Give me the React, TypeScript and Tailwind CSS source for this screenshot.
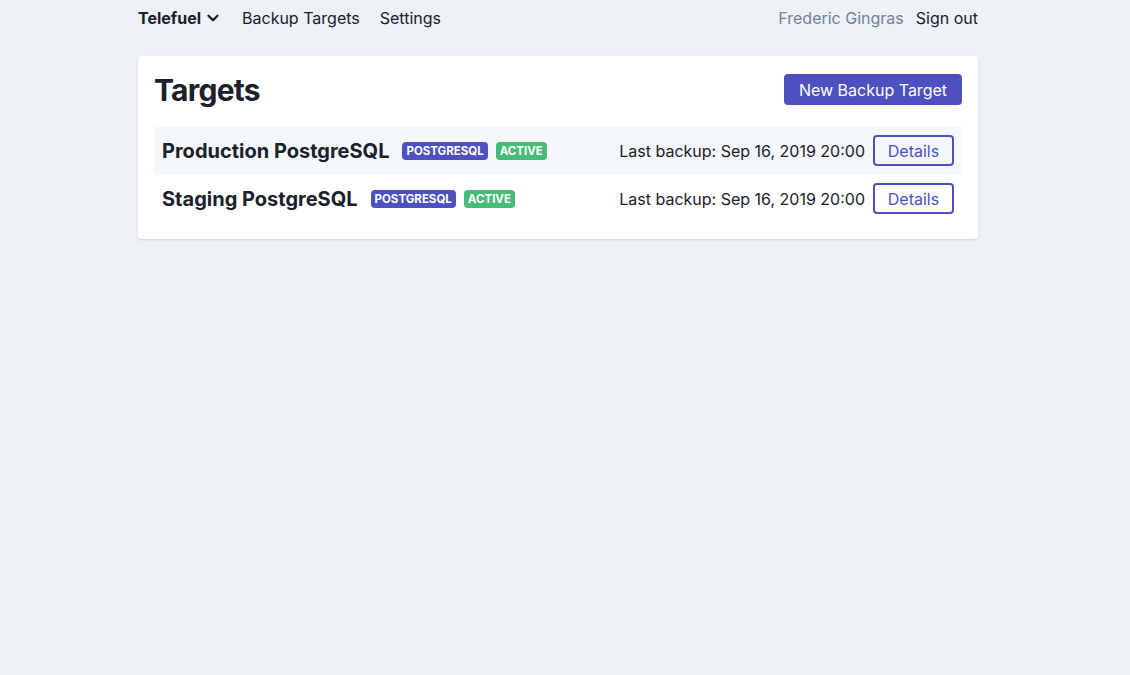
import { ChevronDown } from 'lucide-react'

interface Target {
  name: string
  kind: string
  status: string
  lastBackup: string
}

const targets: Target[] = [
  { name: 'Production PostgreSQL', kind: 'postgresql', status: 'active', lastBackup: 'Sep 16, 2019 20:00' },
  { name: 'Staging PostgreSQL', kind: 'postgresql', status: 'active', lastBackup: 'Sep 16, 2019 20:00' },
]

function TargetRow({ target, striped }: { target: Target; striped: boolean }) {
  return (
    <div className={`flex items-center justify-between h-12 px-2 pb-px ${striped ? 'bg-[#f5f8fb]' : ''}`}>
      <div className="flex items-center">
        <span className="text-xl font-bold text-[#1a202c]">{target.name}</span>
        <span className="ml-[13px] px-1 h-[18px] leading-[18px] rounded-sm bg-[#4c51bf] text-white text-[11.5px] font-bold uppercase">
          {target.kind}
        </span>
        <span className="ml-2 px-1 h-[18px] leading-[18px] rounded-sm bg-[#48bb78] text-white text-[11.5px] font-bold uppercase">
          {target.status}
        </span>
      </div>
      <div className="flex items-center">
        <span className="text-base text-[#1a202c]">Last backup: {target.lastBackup}</span>
        <button className="ml-2 h-[31px] w-[81px] border-2 border-[#4c51bf] rounded-sm text-[#4c51bf] text-base">
          Details
        </button>
      </div>
    </div>
  )
}

export default function App() {
  return (
    <div className="min-h-[675px] bg-[#edf2f7] font-['Inter',sans-serif] text-[#1a202c]">
      <div className="w-[840px] ml-[138px]">
        {/* Nav */}
        <nav className="flex items-center justify-between h-9">
          <div className="flex items-center text-base">
            <span className="flex items-center font-bold">
              Telefuel
              <ChevronDown size={18} strokeWidth={3.2} className="ml-[3px]" />
            </span>
            <span className="ml-5">Backup Targets</span>
            <span className="ml-5">Settings</span>
          </div>
          <div className="flex items-center text-base">
            <span className="text-[#718096]">Frederic Gingras</span>
            <span className="ml-3">Sign out</span>
          </div>
        </nav>

        {/* Card */}
        <div className="mt-5 bg-white rounded shadow p-4">
          <div className="flex items-center justify-between h-[35px]">
            <h1 className="text-3xl font-bold tracking-tight">Targets</h1>
            <button className="h-[31px] px-[15px] bg-[#4c51bf] text-white text-base rounded-sm">
              New Backup Target
            </button>
          </div>
          <div className="mt-5">
            {targets.map((t, i) => (
              <TargetRow key={t.name} target={t} striped={i % 2 === 0} />
            ))}
          </div>
        </div>
      </div>
    </div>
  )
}
